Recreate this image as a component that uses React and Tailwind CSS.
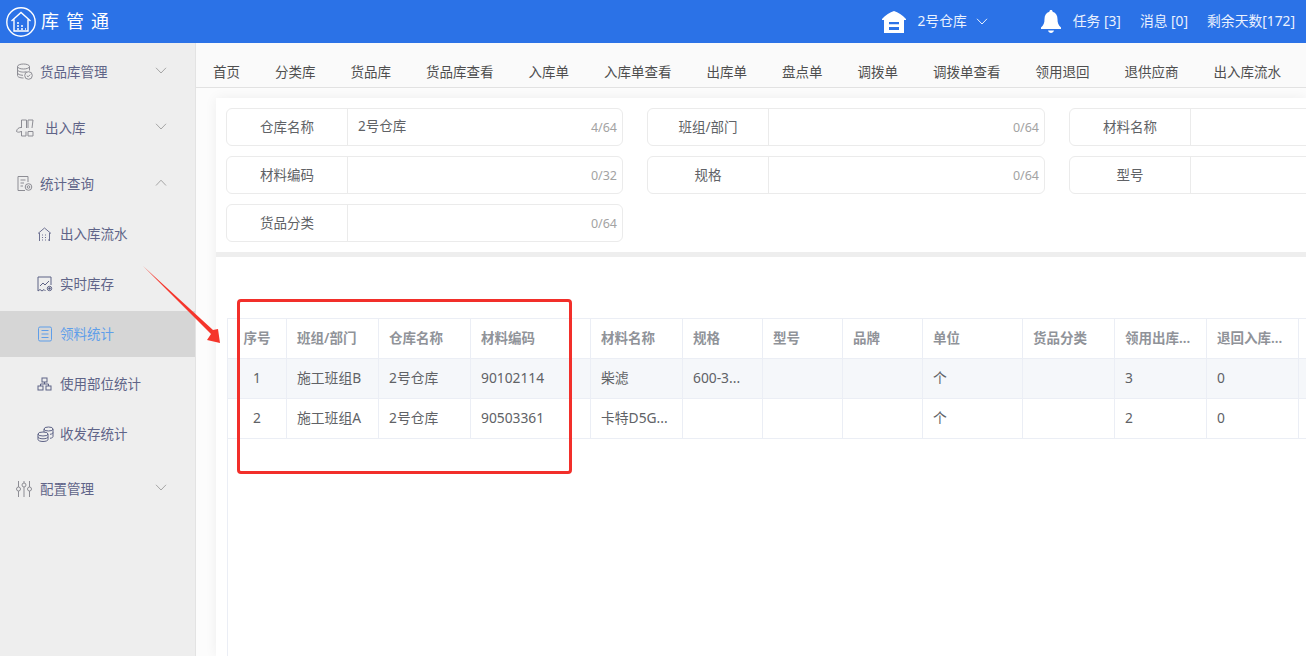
import React from "react";

const FONT = { fontFamily: '"Noto Sans","Noto Sans CJK SC",sans-serif' };

const Chevron = ({ up = false, className = "" }) => (
  <svg width="12" height="7" viewBox="0 0 12 7" fill="none" stroke="currentColor" strokeWidth="1" className={className}>
    {up ? <path d="M1 6.5 6 1.2l5 5.3" /> : <path d="M1 .8 6 6l5-5.2" />}
  </svg>
);

const S = ({ children, w = 18, h = 18, vb = "0 0 18 18", color = "#8d8d94", sw = 1 }) => (
  <svg width={w} height={h} viewBox={vb} fill="none" stroke={color} strokeWidth={sw} className="shrink-0">
    {children}
  </svg>
);

const IconDb = () => (
  <S>
    <ellipse cx="7.5" cy="3.5" rx="6" ry="2.5" />
    <path d="M1.5 3.5v9c0 1.4 2.4 2.5 6 2.5M13.5 3.5v4M1.5 6.6c0 1.4 2.7 2.5 6 2.5 1 0 2-.1 3-.4M1.5 9.8c0 1.4 2.4 2.4 5.5 2.5" />
    <circle cx="12.5" cy="12.5" r="3.8" />
    <path d="m10.8 12.6 1.3 1.2 2.1-2.2" />
  </S>
);
const IconInOut = () => (
  <svg width="20" height="18" viewBox="0 0 20 18" fill="none" stroke="#8d8d94" strokeWidth="1" className="shrink-0">
    <path d="M5.5 9V1h5v8M12 9V1h5l-1 8M5 8.5C2.5 8.5.8 10 .5 12.5c1.500 1 3 .8 4.500 0M5.500 12v5H10v-4.500M12 12.500h5V17h-5z" />
  </svg>
);
const IconReport = () => (
  <S>
    <path d="M9 15.5H2V1.500h10V7" />
    <path d="M4.500 5h5M4.500 8H8M4.500 11H7" />
    <circle cx="12.5" cy="12" r="3.3" />
    <circle cx="12.5" cy="12" r="1.3" />
  </S>
);
const IconHouse = () => (
  <S color="#6d7192" w={15} h={15} vb="0 0 15 15">
    <path d="M1 6.5 7.5 1 14 6.5M2.5 6v8M12.5 6v8" />
    <path d="M5 8h1M8 8h1M5 10.5h1M8 10.5h1M5 13h1M8 13h1M11 13h1" />
  </S>
);
const IconChart = () => (
  <S color="#5d6285" w={16} h={16} vb="0 0 16 16">
    <path d="M1 1h13v8M1 1v14l2-1.5L5 15l2-1.5L8.500 15" />
    <path d="m3 10 3-3 2 2 4-4" />
    <circle cx="12.5" cy="12.5" r="2.2" />
    <circle cx="12.5" cy="12.5" r=".8" fill="#5d6285" />
  </S>
);
const IconDoc = () => (
  <S color="#5f9ee9" w={16} h={16} vb="0 0 16 16">
    <rect x="1.5" y="1" width="13" height="14" rx="1.5" />
    <path d="M4.5 4.5h7M4.5 8h7M4.5 11.5h7" />
  </S>
);
const IconTree = () => (
  <S color="#5d6285" w={15} h={14} vb="0 0 15 14">
    <rect x="5" y="1" width="5" height="4" />
    <rect x="1" y="9" width="5" height="4" />
    <rect x="9" y="9" width="5" height="4" />
    <path d="M7.5 5v2M3.500 9V7h8v2" />
  </S>
);
const IconCoins = () => (
  <S color="#5d6285" w={17} h={16} vb="0 0 17 16">
    <ellipse cx="11.5" cy="3" rx="4.5" ry="2" />
    <path d="M7 3v3M16 3v7.500c0 1-1 1.500-3 1.800M16 6.500c0 1-1 1.500-3 1.800" />
    <ellipse cx="6" cy="8" rx="5" ry="2" />
    <path d="M1 8v5.500c0 1.100 2.200 2 5 2s5-.9 5-2V8M1 10.800c0 1.100 2.200 2 5 2s5-.9 5-2" />
  </S>
);
const IconSliders = () => (
  <S w={16} h={18} vb="0 0 16 18">
    <path d="M2.500 1v6M2.500 11v6M8 1v2M8 7v10M13.500 1v6M13.500 11v6" />
    <circle cx="2.5" cy="9" r="2" />
    <circle cx="8" cy="5" r="2" />
    <circle cx="13.5" cy="9" r="2" />
  </S>
);

const TopItem = ({ icon, label, up, ml = "ml-[6px]" }) => (
  <div className="flex h-14 items-center pl-4 pr-[28px] text-[#5f6488]">
    {icon}
    <span className={`${ml} text-[13.5px]`}>{label}</span>
    <Chevron up={up} className="ml-auto -mt-1 text-[#a5a5a5]" />
  </div>
);

const SubItem = ({ icon, label, active }) => (
  <div className={`mb-1 flex h-[46px] items-center pl-[37px] text-[13.5px] ${active ? "bg-[#d6d6d6] text-[#5f9ee9]" : "text-[#5f6488]"}`}>
    <span className="flex w-[23px] items-center">{icon}</span>
    <span>{label}</span>
  </div>
);

const tabs = ["首页", "分类库", "货品库", "货品库查看", "入库单", "入库单查看", "出库单", "盘点单", "调拨单", "调拨单查看", "领用退回", "退供应商", "出入库流水"];

const Field = ({ label, value, count, w = "w-[397px]" }) => (
  <div className={`flex h-[38px] ${w} shrink-0 rounded-md border border-[#ebebeb] bg-white text-[13.5px] text-[#606266]`}>
    <div className="flex w-[121px] shrink-0 items-center justify-center border-r border-[#ebebeb]">{label}</div>
    <div className="flex flex-1 items-center justify-between pl-[10px] pr-[5px]">
      <span className="-mt-[2px]">{value}</span>
      {count && <span className="mt-[2px] text-[12.5px] text-[#a3a3a3]">{count}</span>}
    </div>
  </div>
);

const cols = [
  { w: "w-[59px]", t: "序号", center: true },
  { w: "w-[92px]", t: "班组/部门" },
  { w: "w-[92px]", t: "仓库名称" },
  { w: "w-[120px]", t: "材料编码" },
  { w: "w-[92px]", t: "材料名称" },
  { w: "w-[80px]", t: "规格" },
  { w: "w-[80px]", t: "型号" },
  { w: "w-[80px]", t: "品牌" },
  { w: "w-[100px]", t: "单位" },
  { w: "w-[92px]", t: "货品分类" },
  { w: "w-[92px]", t: "领用出库..." },
  { w: "w-[92px]", t: "退回入库..." },
  { w: "w-[92px]", t: "" },
];

const rows = [
  ["1", "施工班组B", "2号仓库", "90102114", "柴滤", "600-3...", "", "", "个", "", "3", "0", ""],
  ["2", "施工班组A", "2号仓库", "90503361", "卡特D5G...", "", "", "", "个", "", "2", "0", ""],
];

export default function App() {
  return (
    <div className="relative flex h-screen w-full flex-col overflow-hidden bg-white" style={FONT}>
      <header className="flex h-[43px] shrink-0 items-center bg-[#2b72e7] pl-[6px] pr-[11px] text-[13.8px] text-[#eaf1fe]">
        <svg width="30" height="30" viewBox="0 0 30 30" fill="none" stroke="white" className="shrink-0">
          <circle cx="15" cy="15" r="14.2" strokeWidth="1.4" />
          <path d="M5.5 14 15 5.500 24.500 14M8 12.500V24h14V12.500" strokeWidth="1.4" />
          <path d="M11 16h2M11 19h2M11 22h2M15 19h2M15 22h2M19 22h1" strokeWidth="1.5" />
        </svg>
        <span className="ml-[5px] text-[18px] tracking-[7px] text-white">库管通</span>
        <div className="ml-auto flex items-center">
          <svg width="24" height="22" viewBox="0 0 24 22" fill="white" className="shrink-0">
            <path d="M12 0c4 1.500 8.500 4 12 8v1h-2v13H2V9H0V8C3.500 4 8 1.500 12 0z" />
            <path d="M7 11h10v2.200H7zM7 16h10v3H7z" fill="#2b72e7" />
          </svg>
          <span className="ml-[11px]">2号仓库</span>
          <Chevron className="ml-[9px] text-[#eaf1fe]" />
          <svg width="20" height="24" viewBox="0 0 20 24" fill="white" className="ml-[53px] shrink-0">
            <path d="M10 0c1 0 1.600.7 1.600 1.700C15 2.600 16.500 5.500 16.500 9c0 4 .8 6 3.500 8.500V19H0v-1.500C2.700 15 3.500 13 3.500 9c0-3.500 1.500-6.400 4.900-7.300C8.400.7 9 0 10 0z" />
            <path d="M7 20.500h6c-.4 1.500-1.600 2.500-3 2.500s-2.600-1-3-2.500z" />
          </svg>
          <span className="ml-[12px]">任务 [3]</span>
          <span className="ml-[19px]">消息 [0]</span>
          <span className="ml-[19px]">剩余天数[172]</span>
        </div>
      </header>

      <div className="flex min-h-0 flex-1">
        <aside className="w-[196px] shrink-0 border-r border-[#e3e3e3] bg-[#eeeeee] pt-px">
          <TopItem icon={<IconDb />} label="货品库管理" />
          <TopItem icon={<IconInOut />} label="出入库" ml="ml-[9px]" />
          <TopItem icon={<IconReport />} label="统计查询" up />
          <div className="-mt-px">
            <SubItem icon={<IconHouse />} label="出入库流水" />
            <SubItem icon={<IconChart />} label="实时库存" />
            <SubItem icon={<IconDoc />} label="领料统计" active />
            <SubItem icon={<IconTree />} label="使用部位统计" />
            <SubItem icon={<IconCoins />} label="收发存统计" />
          </div>
          <div className="mt-[2px]">
            <TopItem icon={<IconSliders />} label="配置管理" ml="ml-[8px]" />
          </div>
        </aside>

        <main className="flex min-w-0 flex-1 flex-col overflow-hidden bg-[#fcfcfc]">
          <nav className="flex h-[45px] shrink-0 items-center gap-[35px] border-b border-[#e2e2e2] bg-[#fafafa] pl-[17px] pt-[15px] text-[13.5px] text-[#4f4f4f] whitespace-nowrap">
            {tabs.map((t) => (
              <span key={t}>{t}</span>
            ))}
          </nav>
          <div className="ml-5 mt-[10px] flex flex-1 flex-col gap-[5px] bg-[#eeeeee] shadow-[0_0_12px_rgba(0,0,0,0.06)]">
            <section className="flex shrink-0 flex-col gap-[10px] bg-white p-[10px]">
              <div className="flex gap-6">
                <Field label="仓库名称" value="2号仓库" count="4/64" />
                <Field label="班组/部门" count="0/64" w="w-[398px]" />
                <Field label="材料名称" />
              </div>
              <div className="flex gap-6">
                <Field label="材料编码" count="0/32" />
                <Field label="规格" count="0/64" w="w-[398px]" />
                <Field label="型号" />
              </div>
              <div className="flex gap-6">
                <Field label="货品分类" count="0/64" />
              </div>
            </section>
            <section className="flex-1 bg-white pl-[11px] pt-[61px]">
              <div className="h-full border-l border-[#ebeef5]">
                <table className="w-[1143px] table-fixed border-separate border-spacing-0 text-[13.8px] text-[#606266]">
                  <thead>
                    <tr>
                      {cols.map((c, i) => (
                        <th key={i} className={`${c.w} h-[41px] border-y border-r border-[#ebeef5] font-semibold text-[13.5px] text-[#909399] ${c.center ? "text-center" : "px-[10px] text-left"}`}>
                          {c.t}
                        </th>
                      ))}
                    </tr>
                  </thead>
                  <tbody>
                    {rows.map((r, ri) => (
                      <tr key={ri} className={ri === 0 ? "bg-[#f5f7fa]" : "bg-white"}>
                        {r.map((v, i) => (
                          <td key={i} className={`h-10 border-b border-r border-[#ebeef5] px-[10px] whitespace-nowrap ${i === 0 ? "text-center" : "text-left"}`}>
                            {v}
                          </td>
                        ))}
                      </tr>
                    ))}
                  </tbody>
                </table>
              </div>
            </section>
          </div>
        </main>
      </div>

      <div className="absolute left-[237px] top-[299px] h-[175px] w-[335px] rounded-[4px] border-[3px] border-[#f22f2a]" />
      <svg width="90" height="90" viewBox="0 0 90 90" className="absolute left-[140px] top-[262px]">
        <polygon points="3,4 73,68 78,67 80,81 67,78 71,72" fill="#f5352b" />
      </svg>
    </div>
  );
}
